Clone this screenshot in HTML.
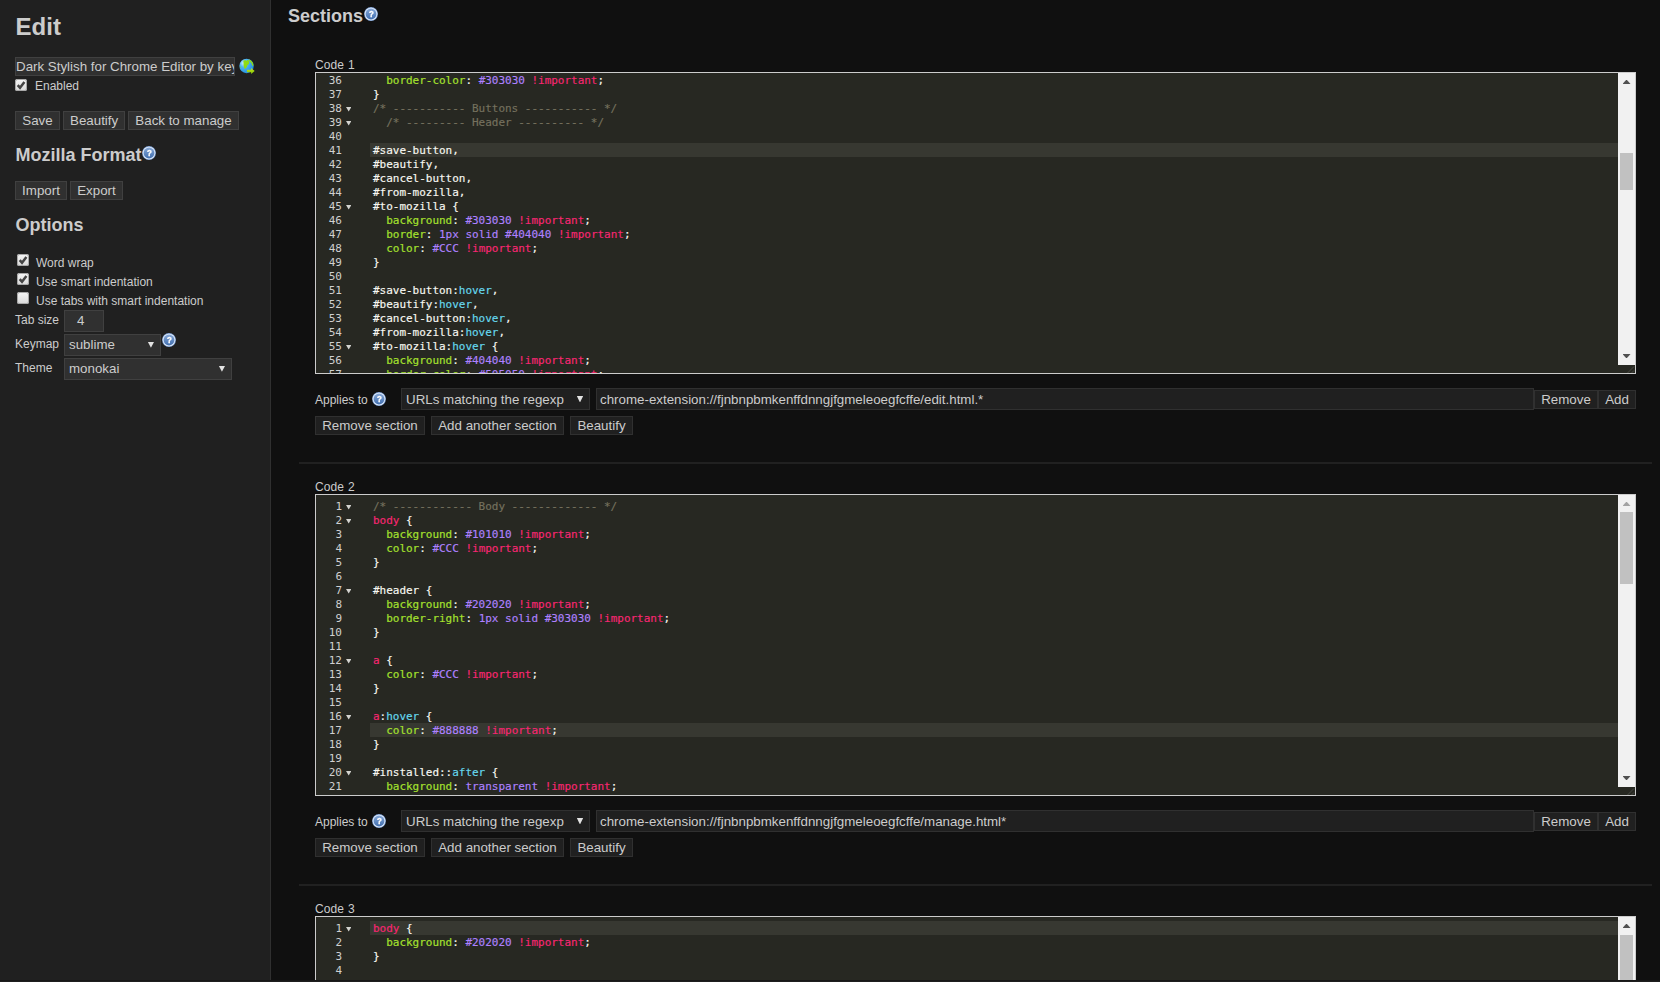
<!DOCTYPE html>
<html lang="en">
<head>
<meta charset="utf-8">
<title>Edit Style</title>
<style>
*{box-sizing:border-box;margin:0;padding:0}
html,body{width:1660px;height:982px;overflow:hidden;background:#101010}
body{position:relative;font-family:"Liberation Sans",Arial,sans-serif;font-size:12px;color:#ccc;line-height:normal}
.a{position:absolute;white-space:nowrap}
#side{position:absolute;left:0;top:0;width:271px;height:982px;background:#202020;border-right:1px solid #303030}
h1.a{font-size:24px;font-weight:bold}
h2.a{font-size:18px;font-weight:bold}
.f13{font-size:13.333px}
.btn{position:absolute;white-space:nowrap;height:19px;font-size:13.333px;line-height:15px;padding:1px 6px;border:1px solid #404040;background:#303030;color:#ccc;text-align:center}
.btn2{border-color:#303030;background:#202020}
.inp{position:absolute;white-space:nowrap;overflow:hidden;font-size:13.333px;line-height:15px;border:1px solid #404040;background:#303030;color:#ccc}
.inp2{border-color:#303030;background:#202020}
.cb{position:absolute;width:12px;height:12px;border-radius:2.5px;background:linear-gradient(#f6f6f6,#d9d9d9);box-shadow:inset 0 0 0 1px #a8a8a8}
.cb svg{position:absolute;left:0;top:0}
.arr{position:absolute;width:6.6px;height:6.6px;background:#e2e2e2;clip-path:polygon(0 0,100% 0,50% 100%)}
.help{position:absolute;width:14px;height:14px}
.hr{position:absolute;left:299px;width:1353px;height:2px;background:#212121}
.cm{position:absolute;left:315px;width:1321px;height:302px;border:1px solid #ccc;background:#272822;overflow:hidden;font-family:"DejaVu Sans Mono", "Liberation Mono", monospace;font-size:11px;line-height:14px;color:#f8f8f2}
.ln{position:absolute;left:0;margin-top:1px;width:26px;text-align:right;height:14px;color:#d0d0d0;white-space:pre}
.fd{position:absolute;left:30px;width:5.4px;height:4.5px;background:#d4d4d0;clip-path:polygon(0 0,100% 0,50% 100%)}
.cl{position:absolute;left:57px;margin-top:1px;letter-spacing:-0.022px;-webkit-text-stroke:0.15px;height:14px;white-space:pre}
.al{position:absolute;left:54px;width:1248px;height:14px;background:#373831}
.sb{position:absolute;left:1302px;top:0;width:17px;height:292px;background:#f1f1f1}
.th{position:absolute;left:2px;width:13px;background:#c1c1c1}
.up{position:absolute;left:4.5px;top:6.6px;width:8px;height:4.4px;background:#505050;clip-path:polygon(50% 0,100% 100%,0 100%)}
.dn{position:absolute;left:4.5px;top:281px;width:8px;height:4.4px;background:#505050;clip-path:polygon(0 0,100% 0,50% 100%)}
.grip{position:absolute;left:1302px;top:292px;width:17px;height:8px}
.c{color:#75715e}.p{color:#a6e22e}.n{color:#ae81ff}.k{color:#f92672}.v{color:#66d9ef}
</style>
</head>
<body>
<div id="side">
<h1 class="a" style="left:15.6px;top:13px">Edit</h1>
<div class="inp" style="left:15px;top:57px;width:220px;height:19px;padding:1px 0 0 0">Dark Stylish for Chrome Editor by key</div>
<svg class="a" style="left:238px;top:57px" width="18" height="18" viewBox="0 0 18 18"><defs><radialGradient id="gg" cx="0.3" cy="0.3" r="0.8"><stop offset="0" stop-color="#d8f4ff"/><stop offset="0.35" stop-color="#4fb4f0"/><stop offset="1" stop-color="#1f8de0"/></radialGradient><linearGradient id="ga" x1="0" y1="0" x2="0" y2="1"><stop offset="0" stop-color="#c8e820"/><stop offset="1" stop-color="#7fc400"/></linearGradient></defs><circle cx="8.55" cy="8.95" r="7.2" fill="url(#gg)"/><path d="M5.3 3.7 L7.4 2.9 L8.2 3.9 L9.4 3 L10.9 3.5 L11.3 5.4 L10.8 7.3 L9.5 7.9 L9 9.6 L7.8 11.5 L6.5 11.7 L5.7 9 L5.5 6 Z" fill="#8fdc10"/><path d="M10.6 2.3 L12.7 3.2 L14.5 5.2 L15.4 7.8 L15.2 9 L14.2 8.6 L13.5 6.6 L12.2 4.9 L10.9 3.6 Z" fill="#8fdc10"/><path d="M1.9 9.6 L2.8 10 L2.6 11 L1.9 10.6 Z" fill="#8fdc10"/><path d="M8.9 12.8 L13.1 12.8 L13.1 11.1 L16.7 14.05 L13.1 17 L13.1 15.3 L8.9 15.3 Z" fill="url(#ga)"/></svg>
<div class="cb" style="left:15px;top:79px"><svg width="12" height="12" viewBox="0 0 12 12"><path d="M2.7 6.2 L5 8.7 L9.4 3" fill="none" stroke="#444" stroke-width="2.5"/></svg></div>
<div class="a" style="left:35px;top:79px">Enabled</div>
<div class="btn" style="left:15px;top:111px;width:45px">Save</div>
<div class="btn" style="left:63px;top:111px;width:62px">Beautify</div>
<div class="btn" style="left:128px;top:111px;width:111px">Back to manage</div>
<h2 class="a" style="left:15.6px;top:145px">Mozilla Format</h2>
<svg class="help" style="left:142px;top:146px;will-change:transform" viewBox="0 0 14 14"><defs><linearGradient id="hg1" x1="0" y1="0" x2="0" y2="1"><stop offset="0" stop-color="#86a8d8"/><stop offset="1" stop-color="#416fb0"/></linearGradient></defs><circle cx="7" cy="7" r="6.9" fill="#86aadf"/><circle cx="7" cy="7" r="6.3" fill="#e2ecf9"/><circle cx="7" cy="7" r="5.45" fill="url(#hg1)"/><text transform="translate(7.3 10.15) scale(0.88 1)" x="0" y="0" font-family="Liberation Sans,Arial,sans-serif" font-weight="bold" font-size="9" fill="#fff" stroke="#fff" stroke-width="0.35" text-anchor="middle">?</text></svg>
<div class="btn" style="left:15px;top:181px;width:52px">Import</div>
<div class="btn" style="left:70px;top:181px;width:53px">Export</div>
<h2 class="a" style="left:15.6px;top:215px">Options</h2>
<div class="cb" style="left:17px;top:254px"><svg width="12" height="12" viewBox="0 0 12 12"><path d="M2.7 6.2 L5 8.7 L9.4 3" fill="none" stroke="#444" stroke-width="2.5"/></svg></div>
<div class="a" style="left:36px;top:256px">Word wrap</div>
<div class="cb" style="left:17px;top:273px"><svg width="12" height="12" viewBox="0 0 12 12"><path d="M2.7 6.2 L5 8.7 L9.4 3" fill="none" stroke="#444" stroke-width="2.5"/></svg></div>
<div class="a" style="left:36px;top:275px">Use smart indentation</div>
<div class="cb" style="left:17px;top:292px"></div>
<div class="a" style="left:36px;top:294px">Use tabs with smart indentation</div>
<div class="a" style="left:15px;top:313px">Tab size</div>
<div class="inp" style="left:64px;top:310px;width:40px;height:22px;padding:2px 0 0 12px">4</div>
<div class="a" style="left:15px;top:337px">Keymap</div>
<div class="inp" style="left:64px;top:334px;width:97px;height:22px;padding:2px 0 0 4px">sublime</div>
<div class="arr" style="left:147.9px;top:341.9px;width:6.1px;height:5.9px"></div>
<svg class="help" style="left:162px;top:333px;will-change:transform" viewBox="0 0 14 14"><defs><linearGradient id="hg2" x1="0" y1="0" x2="0" y2="1"><stop offset="0" stop-color="#86a8d8"/><stop offset="1" stop-color="#416fb0"/></linearGradient></defs><circle cx="7" cy="7" r="6.9" fill="#86aadf"/><circle cx="7" cy="7" r="6.3" fill="#e2ecf9"/><circle cx="7" cy="7" r="5.45" fill="url(#hg2)"/><text transform="translate(7.3 10.15) scale(0.88 1)" x="0" y="0" font-family="Liberation Sans,Arial,sans-serif" font-weight="bold" font-size="9" fill="#fff" stroke="#fff" stroke-width="0.35" text-anchor="middle">?</text></svg>
<div class="a" style="left:15px;top:361px">Theme</div>
<div class="inp" style="left:64px;top:358px;width:168px;height:22px;padding:2px 0 0 4px">monokai</div>
<div class="arr" style="left:218.9px;top:365.9px;width:6.1px;height:5.9px"></div>
</div>
<h2 class="a" style="left:288px;top:6px">Sections</h2>
<svg class="help" style="left:364px;top:7px;will-change:transform" viewBox="0 0 14 14"><defs><linearGradient id="hg3" x1="0" y1="0" x2="0" y2="1"><stop offset="0" stop-color="#86a8d8"/><stop offset="1" stop-color="#416fb0"/></linearGradient></defs><circle cx="7" cy="7" r="6.9" fill="#86aadf"/><circle cx="7" cy="7" r="6.3" fill="#e2ecf9"/><circle cx="7" cy="7" r="5.45" fill="url(#hg3)"/><text transform="translate(7.3 10.15) scale(0.88 1)" x="0" y="0" font-family="Liberation Sans,Arial,sans-serif" font-weight="bold" font-size="9" fill="#fff" stroke="#fff" stroke-width="0.35" text-anchor="middle">?</text></svg>
<div class="a" style="left:315px;top:58px;word-spacing:0.6px;letter-spacing:0.08px">Code 1</div>
<div class="cm" style="top:72px">
<div class="al" style="top:70px"></div>
<div class="ln" style="top:0px">36</div>
<div class="cl" style="top:0px">  <span class="p">border-color</span>: <span class="n">#303030</span> <span class="k">!important</span>;</div>
<div class="ln" style="top:14px">37</div>
<div class="cl" style="top:14px">}</div>
<div class="ln" style="top:28px">38</div>
<div class="fd" style="top:34px"></div>
<div class="cl" style="top:28px"><span class="c">/* ----------- Buttons ----------- */</span></div>
<div class="ln" style="top:42px">39</div>
<div class="fd" style="top:48px"></div>
<div class="cl" style="top:42px"><span class="c">  /* --------- Header ---------- */</span></div>
<div class="ln" style="top:56px">40</div>
<div class="ln" style="top:70px">41</div>
<div class="cl" style="top:70px">#save-button,</div>
<div class="ln" style="top:84px">42</div>
<div class="cl" style="top:84px">#beautify,</div>
<div class="ln" style="top:98px">43</div>
<div class="cl" style="top:98px">#cancel-button,</div>
<div class="ln" style="top:112px">44</div>
<div class="cl" style="top:112px">#from-mozilla,</div>
<div class="ln" style="top:126px">45</div>
<div class="fd" style="top:132px"></div>
<div class="cl" style="top:126px">#to-mozilla {</div>
<div class="ln" style="top:140px">46</div>
<div class="cl" style="top:140px">  <span class="p">background</span>: <span class="n">#303030</span> <span class="k">!important</span>;</div>
<div class="ln" style="top:154px">47</div>
<div class="cl" style="top:154px">  <span class="p">border</span>: <span class="n">1px</span> <span class="n">solid</span> <span class="n">#404040</span> <span class="k">!important</span>;</div>
<div class="ln" style="top:168px">48</div>
<div class="cl" style="top:168px">  <span class="p">color</span>: <span class="n">#CCC</span> <span class="k">!important</span>;</div>
<div class="ln" style="top:182px">49</div>
<div class="cl" style="top:182px">}</div>
<div class="ln" style="top:196px">50</div>
<div class="ln" style="top:210px">51</div>
<div class="cl" style="top:210px">#save-button:<span class="v">hover</span>,</div>
<div class="ln" style="top:224px">52</div>
<div class="cl" style="top:224px">#beautify:<span class="v">hover</span>,</div>
<div class="ln" style="top:238px">53</div>
<div class="cl" style="top:238px">#cancel-button:<span class="v">hover</span>,</div>
<div class="ln" style="top:252px">54</div>
<div class="cl" style="top:252px">#from-mozilla:<span class="v">hover</span>,</div>
<div class="ln" style="top:266px">55</div>
<div class="fd" style="top:272px"></div>
<div class="cl" style="top:266px">#to-mozilla:<span class="v">hover</span> {</div>
<div class="ln" style="top:280px">56</div>
<div class="cl" style="top:280px">  <span class="p">background</span>: <span class="n">#404040</span> <span class="k">!important</span>;</div>
<div class="ln" style="top:294px">57</div>
<div class="cl" style="top:294px">  <span class="p">border-color</span>: <span class="n">#505050</span> <span class="k">!important</span>;</div>
<div class="sb"><div class="up"></div><div class="th" style="top:80px;height:37px"></div><div class="dn"></div></div>
<svg class="grip" viewBox="0 0 17 8"><path d="M9.5 8 L16 1.5 M13.5 8 L16 5.5" stroke="#484942" stroke-width="1" fill="none"/></svg>
</div>
<div class="a" style="left:315px;top:393px">Applies to</div>
<svg class="help" style="left:372px;top:392px;will-change:transform" viewBox="0 0 14 14"><defs><linearGradient id="hg4" x1="0" y1="0" x2="0" y2="1"><stop offset="0" stop-color="#86a8d8"/><stop offset="1" stop-color="#416fb0"/></linearGradient></defs><circle cx="7" cy="7" r="6.9" fill="#86aadf"/><circle cx="7" cy="7" r="6.3" fill="#e2ecf9"/><circle cx="7" cy="7" r="5.45" fill="url(#hg4)"/><text transform="translate(7.3 10.15) scale(0.88 1)" x="0" y="0" font-family="Liberation Sans,Arial,sans-serif" font-weight="bold" font-size="9" fill="#fff" stroke="#fff" stroke-width="0.35" text-anchor="middle">?</text></svg>
<div class="inp inp2" style="left:401px;top:388px;width:189px;height:22px;padding:3px 0 0 4px">URLs matching the regexp</div>
<div class="arr" style="left:576.7px;top:395.8px"></div>
<div class="inp inp2" style="left:596px;top:388px;width:938px;height:22px;padding:3px 0 0 3px">chrome-extension://fjnbnpbmkenffdnngjfgmeleoegfcffe/edit.html.*</div>
<div class="btn btn2" style="right:24px;top:390px;width:38px">Add</div>
<div class="btn btn2" style="right:62px;top:390px;width:64px">Remove</div>
<div class="btn btn2" style="left:315px;top:416px;width:110px">Remove section</div>
<div class="btn btn2" style="left:431px;top:416px;width:133px">Add another section</div>
<div class="btn btn2" style="left:570px;top:416px;width:63px">Beautify</div>
<div class="hr" style="top:462px"></div>
<div class="a" style="left:315px;top:480px;word-spacing:0.6px;letter-spacing:0.08px">Code 2</div>
<div class="cm" style="top:494px">
<div class="al" style="top:228px"></div>
<div class="ln" style="top:4px">1</div>
<div class="fd" style="top:10px"></div>
<div class="cl" style="top:4px"><span class="c">/* ------------ Body ------------- */</span></div>
<div class="ln" style="top:18px">2</div>
<div class="fd" style="top:24px"></div>
<div class="cl" style="top:18px"><span class="k">body</span> {</div>
<div class="ln" style="top:32px">3</div>
<div class="cl" style="top:32px">  <span class="p">background</span>: <span class="n">#101010</span> <span class="k">!important</span>;</div>
<div class="ln" style="top:46px">4</div>
<div class="cl" style="top:46px">  <span class="p">color</span>: <span class="n">#CCC</span> <span class="k">!important</span>;</div>
<div class="ln" style="top:60px">5</div>
<div class="cl" style="top:60px">}</div>
<div class="ln" style="top:74px">6</div>
<div class="ln" style="top:88px">7</div>
<div class="fd" style="top:94px"></div>
<div class="cl" style="top:88px">#header {</div>
<div class="ln" style="top:102px">8</div>
<div class="cl" style="top:102px">  <span class="p">background</span>: <span class="n">#202020</span> <span class="k">!important</span>;</div>
<div class="ln" style="top:116px">9</div>
<div class="cl" style="top:116px">  <span class="p">border-right</span>: <span class="n">1px</span> <span class="n">solid</span> <span class="n">#303030</span> <span class="k">!important</span>;</div>
<div class="ln" style="top:130px">10</div>
<div class="cl" style="top:130px">}</div>
<div class="ln" style="top:144px">11</div>
<div class="ln" style="top:158px">12</div>
<div class="fd" style="top:164px"></div>
<div class="cl" style="top:158px"><span class="k">a</span> {</div>
<div class="ln" style="top:172px">13</div>
<div class="cl" style="top:172px">  <span class="p">color</span>: <span class="n">#CCC</span> <span class="k">!important</span>;</div>
<div class="ln" style="top:186px">14</div>
<div class="cl" style="top:186px">}</div>
<div class="ln" style="top:200px">15</div>
<div class="ln" style="top:214px">16</div>
<div class="fd" style="top:220px"></div>
<div class="cl" style="top:214px"><span class="k">a</span>:<span class="v">hover</span> {</div>
<div class="ln" style="top:228px">17</div>
<div class="cl" style="top:228px">  <span class="p">color</span>: <span class="n">#888888</span> <span class="k">!important</span>;</div>
<div class="ln" style="top:242px">18</div>
<div class="cl" style="top:242px">}</div>
<div class="ln" style="top:256px">19</div>
<div class="ln" style="top:270px">20</div>
<div class="fd" style="top:276px"></div>
<div class="cl" style="top:270px">#installed::<span class="v">after</span> {</div>
<div class="ln" style="top:284px">21</div>
<div class="cl" style="top:284px">  <span class="p">background</span>: <span class="n">transparent</span> <span class="k">!important</span>;</div>
<div class="ln" style="top:298px">22</div>
<div class="cl" style="top:298px">  <span class="p">color</span>: <span class="n">#888888</span> <span class="k">!important</span>;</div>
<div class="sb"><div class="up" style="background:#a3a3a3"></div><div class="th" style="top:17px;height:72px"></div><div class="dn"></div></div>
<svg class="grip" viewBox="0 0 17 8"><path d="M9.5 8 L16 1.5 M13.5 8 L16 5.5" stroke="#484942" stroke-width="1" fill="none"/></svg>
</div>
<div class="a" style="left:315px;top:815px">Applies to</div>
<svg class="help" style="left:372px;top:814px;will-change:transform" viewBox="0 0 14 14"><defs><linearGradient id="hg5" x1="0" y1="0" x2="0" y2="1"><stop offset="0" stop-color="#86a8d8"/><stop offset="1" stop-color="#416fb0"/></linearGradient></defs><circle cx="7" cy="7" r="6.9" fill="#86aadf"/><circle cx="7" cy="7" r="6.3" fill="#e2ecf9"/><circle cx="7" cy="7" r="5.45" fill="url(#hg5)"/><text transform="translate(7.3 10.15) scale(0.88 1)" x="0" y="0" font-family="Liberation Sans,Arial,sans-serif" font-weight="bold" font-size="9" fill="#fff" stroke="#fff" stroke-width="0.35" text-anchor="middle">?</text></svg>
<div class="inp inp2" style="left:401px;top:810px;width:189px;height:22px;padding:3px 0 0 4px">URLs matching the regexp</div>
<div class="arr" style="left:576.7px;top:817.8px"></div>
<div class="inp inp2" style="left:596px;top:810px;width:938px;height:22px;padding:3px 0 0 3px">chrome-extension://fjnbnpbmkenffdnngjfgmeleoegfcffe/manage.html*</div>
<div class="btn btn2" style="right:24px;top:812px;width:38px">Add</div>
<div class="btn btn2" style="right:62px;top:812px;width:64px">Remove</div>
<div class="btn btn2" style="left:315px;top:838px;width:110px">Remove section</div>
<div class="btn btn2" style="left:431px;top:838px;width:133px">Add another section</div>
<div class="btn btn2" style="left:570px;top:838px;width:63px">Beautify</div>
<div class="hr" style="top:884px"></div>
<div class="a" style="left:315px;top:902px;word-spacing:0.6px;letter-spacing:0.08px">Code 3</div>
<div class="cm" style="top:916px">
<div class="al" style="top:4px"></div>
<div class="ln" style="top:4px">1</div>
<div class="fd" style="top:10px"></div>
<div class="cl" style="top:4px"><span class="k">body</span> {</div>
<div class="ln" style="top:18px">2</div>
<div class="cl" style="top:18px">  <span class="p">background</span>: <span class="n">#202020</span> <span class="k">!important</span>;</div>
<div class="ln" style="top:32px">3</div>
<div class="cl" style="top:32px">}</div>
<div class="ln" style="top:46px">4</div>
<div class="sb"><div class="up"></div><div class="th" style="top:18px;height:72px"></div><div class="dn"></div></div>
<svg class="grip" viewBox="0 0 17 8"><path d="M9.5 8 L16 1.5 M13.5 8 L16 5.5" stroke="#484942" stroke-width="1" fill="none"/></svg>
</div>
<div class="a" style="left:0;top:980px;width:1660px;height:1px;background:#171717"></div><div class="a" style="left:0;top:981px;width:1660px;height:1px;background:#1e1e1e"></div>
</body>
</html>
